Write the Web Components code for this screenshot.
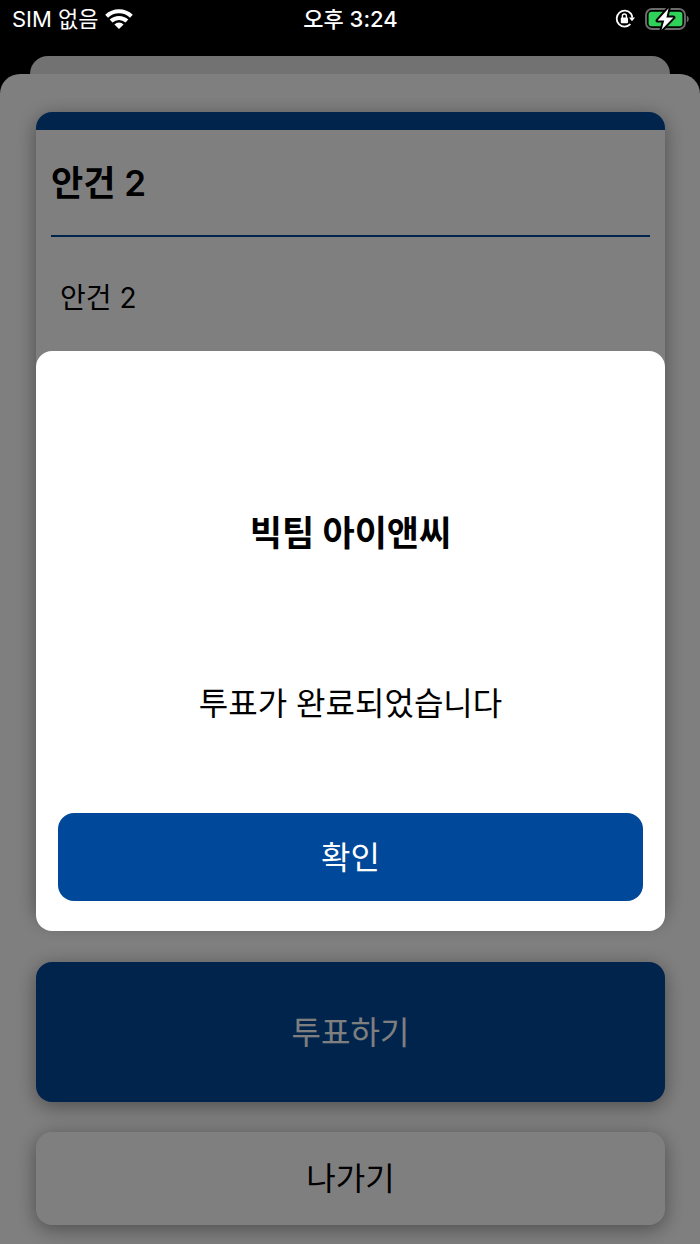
<!DOCTYPE html>
<html lang="ko">
<head>
<meta charset="utf-8">
<meta name="viewport" content="width=device-width, initial-scale=1">
<title>안건 2</title>
<style>
  html, body { margin: 0; height: 100%; }
  body { background: #000; color: #000; font-family: Inter, "Noto Sans CJK KR", sans-serif; }
</style>
</head>
<body>
<vote-screen>
  <status-bar slot="status" carrier="SIM 없음" time="오후 3:24"></status-bar>
  <agenda-card>
    <span slot="title">안건 2</span>
    <span slot="text">안건 2</span>
  </agenda-card>
  <action-button slot="actions" variant="vote">투표하기</action-button>
  <action-button slot="actions" variant="leave">나가기</action-button>
  <alert-modal slot="modal">
    <span slot="title">빅팀 아이앤씨</span>
    <span slot="message">투표가 완료되었습니다</span>
    <action-button slot="action" variant="confirm">확인</action-button>
  </alert-modal>
</vote-screen>

<script>
class ShadowElement extends HTMLElement {
  constructor() {
    super();
    const template = document.createElement('template');
    template.innerHTML = this.constructor.markup;
    this.attachShadow({ mode: 'open' }).append(template.content.cloneNode(true));
  }
}

customElements.define('vote-screen', class extends ShadowElement {
  static markup = `
    <style>
      :host { display: flex; flex-direction: column; min-height: 100%; position: relative; background: #000; }
      .back { height: 18px; margin: 56px 30px 0; border-radius: 18px 18px 0 0; background: #e4e4e4; }
      .sheet { flex: 1; display: flex; flex-direction: column; gap: 44px; padding: 38px 35px 19px 36px;
               border-radius: 20px 20px 0 0; background: #fff; }
      .body { flex: 1; display: grid; }
      .actions { display: grid; gap: 30px; }
      .dim { position: absolute; inset: 0; display: grid; align-items: center; box-sizing: border-box;
             padding: 38px 35px 0 36px; background: rgba(0, 0, 0, .5); }
      .status { position: absolute; top: 0; left: 0; right: 0; }
    </style>
    <div class="back"></div>
    <main class="sheet">
      <div class="body"><slot></slot></div>
      <div class="actions"><slot name="actions"></slot></div>
    </main>
    <div class="dim"><slot name="modal"></slot></div>
    <div class="status"><slot name="status"></slot></div>`;
});

customElements.define('status-bar', class extends ShadowElement {
  static markup = `
    <style>
      :host { display: grid; grid-template-columns: 1fr auto 1fr; align-items: center; height: 38px;
              padding: 0 11px 0 12px; color: #fff; font-size: 22px; line-height: 38px; }
      .left, .right { display: flex; align-items: center; gap: 6px; }
      .right { justify-content: flex-end; gap: 10px; }
      .time { font-weight: 500; }
      svg { display: block; }
    </style>
    <div class="left">
      <span class="carrier"></span>
      <svg width="28" height="20" viewBox="0 0 28 20" aria-label="Wi-Fi">
        <g fill="none" stroke="#fff" stroke-width="4.1">
          <path d="M1.6 7.2a18 18 0 0 1 24.8 0"/>
          <path d="M6.1 12.1a11.6 11.6 0 0 1 15.8 0"/>
        </g>
        <path fill="#fff" d="M9.4 15.4a6.7 6.7 0 0 1 9.2 0L14 20z"/>
      </svg>
    </div>
    <div class="time"></div>
    <div class="right">
      <svg width="20" height="20" viewBox="0 0 20 20" aria-label="화면 방향 고정">
        <path fill="none" stroke="#fff" stroke-width="1.8" d="M15.9 4.6A8 8 0 1 0 15.4 15.2M15.9 4.6a8 8 0 0 1 1.4 4"/>
        <path fill="#fff" d="M14 8.4h6l-3 3.8z"/>
        <rect x="5.8" y="8.6" width="7.2" height="5.6" rx="1" fill="#fff"/>
        <path fill="none" stroke="#fff" stroke-width="1.4" d="M7.4 9V7a2 2 0 0 1 4 0v2"/>
      </svg>
      <svg width="44" height="24" viewBox="0 0 44 24" aria-label="충전 중">
        <rect x="1" y="2" width="39" height="20" rx="6" fill="none" stroke="#6b6b6b" stroke-width="1.9"/>
        <rect x="3.6" y="4.8" width="33.8" height="14.4" rx="3" fill="#30d158"/>
        <path fill="#6b6b6b" d="M41.8 8.7c2.6 1 2.6 5.6 0 6.6z"/>
        <path fill="#fff" stroke="#000" stroke-width="4" stroke-linejoin="round" paint-order="stroke"
              d="M23.6 1.2 12.6 13.6h6.6L16.6 22.8 28.4 10.4h-7z"/>
      </svg>
    </div>`;
  connectedCallback() {
    this.shadowRoot.querySelector('.carrier').textContent = this.getAttribute('carrier');
    this.shadowRoot.querySelector('.time').textContent = this.getAttribute('time');
  }
});

customElements.define('agenda-card', class extends ShadowElement {
  static markup = `
    <style>
      :host { display: block; border-radius: 16px; background: #fff; box-shadow: 0 4px 20px rgba(0, 0, 0, .4); }
      .stripe { height: 18px; border-radius: 16px 16px 0 0; background: #004899; }
      .content { padding: 0 15px; }
      h1 { margin: 0; padding: 33px 0 32px; border-bottom: 2px solid #004899;
           font-size: 35px; font-weight: 600; line-height: 40px; }
      p { margin: 41px 9px; font-size: 28px; line-height: 40px; }
    </style>
    <div class="stripe"></div>
    <div class="content">
      <h1><slot name="title"></slot></h1>
      <p><slot name="text"></slot></p>
    </div>`;
});

customElements.define('action-button', class extends ShadowElement {
  static markup = `
    <style>
      :host { display: grid; }
      button { margin: 0; padding: 25px 16px 23px; border: 0; border-radius: 16px; background: #004899; color: #fff;
               font: inherit; font-size: 32px; line-height: 40px; cursor: pointer; }
      :host([variant="vote"]) button { padding: 51px 16px 49px; box-shadow: 0 4px 20px rgba(0, 0, 0, .4); }
      :host([variant="leave"]) button { padding: 27px 16px 26px; background: #fff; color: #000;
               box-shadow: 0 4px 20px rgba(0, 0, 0, .4); }
    </style>
    <button type="button"><slot></slot></button>`;
});

customElements.define('alert-modal', class extends ShadowElement {
  static markup = `
    <style>
      :host { display: block; }
      section { display: grid; padding: 162px 22px 30px; border-radius: 16px; background: #fff; text-align: center; }
      h2 { margin: 0 0 131px; font-size: 35px; font-weight: 700; line-height: 40px; }
      p { margin: 0 0 89px; font-size: 32px; line-height: 40px; }
    </style>
    <section role="dialog" aria-modal="true" aria-labelledby="title" aria-describedby="message">
      <h2 id="title"><slot name="title"></slot></h2>
      <p id="message"><slot name="message"></slot></p>
      <slot name="action"></slot>
    </section>`;
});
</script>
</body>
</html>
